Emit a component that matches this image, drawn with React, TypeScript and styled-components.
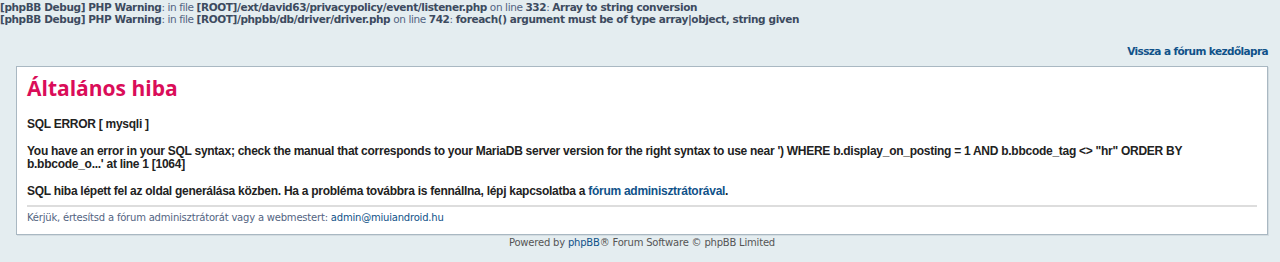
import React from "react";
import styled, { createGlobalStyle } from "styled-components";

const Global = createGlobalStyle`
  html, body { margin: 0; padding: 0; background: #E4EDF0; }
  body {
    font-family: "DejaVu Sans", Verdana, sans-serif;
    font-size: 10px;
    color: #536482;
  }
  a { color: #105289; text-decoration: none; }
`;

const Debug = styled.div`
  font-family: "DejaVu Sans", Verdana, sans-serif;
  font-size: 10.5px;
  letter-spacing: -0.39px;
  line-height: 12px;
  color: #536482;
  padding-top: 1px;
  b { color: #3d4b5f; font-weight: bold; }
`;

const Wrap = styled.div`
  padding: 0 12px 15px 16px;
`;

const Header = styled.div`
  text-align: right;
  height: 39px;
  line-height: 52px;
  font-size: 10.5px;
  letter-spacing: -0.6px;
  font-weight: bold;
`;

const Panel = styled.div`
  background: #ffffff;
  border: 1px solid #A9B8C2;
  box-shadow: 1px 1px 0 #d3dce1;
  padding: 9px 10px 9px;
  margin-top: 2px;
`;

const Title = styled.h1`
  margin: 0;
  font-family: "Trebuchet MS", "Open Sans", sans-serif;
  font-size: 21px;
  font-weight: bold;
  line-height: 24px;
  color: #DA0D59;
`;

const Message = styled.div`
  margin-top: 18px;
  margin-bottom: 4px;
  border-bottom: 2px solid #DDDDDD;
  padding-bottom: 7px;
  color: #222222;
  font-family: "Liberation Sans", Arial, sans-serif;
  font-size: 12px;
  letter-spacing: -0.27px;
  font-weight: bold;
  line-height: 13.4px;
  a { font-weight: bold; }
`;

const Note = styled.p`
  margin: 0;
  font-size: 10px;
  letter-spacing: -0.2px;
  line-height: 14px;
`;

const Footer = styled.div`
  text-align: center;
  font-size: 10px;
  letter-spacing: -0.2px;
  line-height: 12px;
  padding-top: 2px;
  color: #555555;
`;

export default function App() {
  return (
    <>
      <Global />
      <Debug>
        <b>[phpBB Debug] PHP Warning</b>: in file <b>[ROOT]/ext/david63/privacypolicy/event/listener.php</b> on line <b>332</b>: <b>Array to string conversion</b>
        <br />
        <b>[phpBB Debug] PHP Warning</b>: in file <b>[ROOT]/phpbb/db/driver/driver.php</b> on line <b>742</b>: <b>foreach() argument must be of type array|object, string given</b>
      </Debug>
      <Wrap>
        <Header>
          <a href="#">Vissza a fórum kezdőlapra</a>
        </Header>
        <Panel>
          <Title>Általános hiba</Title>
          <Message>
            SQL ERROR [ mysqli ]
            <br />
            <br />
            You have an error in your SQL syntax; check the manual that corresponds to your MariaDB server version for the right syntax to use near ') WHERE b.display_on_posting = 1 AND b.bbcode_tag &lt;&gt; "hr" ORDER BY b.bbcode_o...' at line 1 [1064]
            <br />
            <br />
            SQL hiba lépett fel az oldal generálása közben. Ha a probléma továbbra is fennállna, lépj kapcsolatba a <a href="#">fórum adminisztrátorával</a>.
          </Message>
          <Note>
            Kérjük, értesítsd a fórum adminisztrátorát vagy a webmestert: <a href="#">admin@miuiandroid.hu</a>
          </Note>
        </Panel>
        <Footer>
          Powered by <a href="#">phpBB</a>® Forum Software © phpBB Limited
        </Footer>
      </Wrap>
    </>
  );
}
